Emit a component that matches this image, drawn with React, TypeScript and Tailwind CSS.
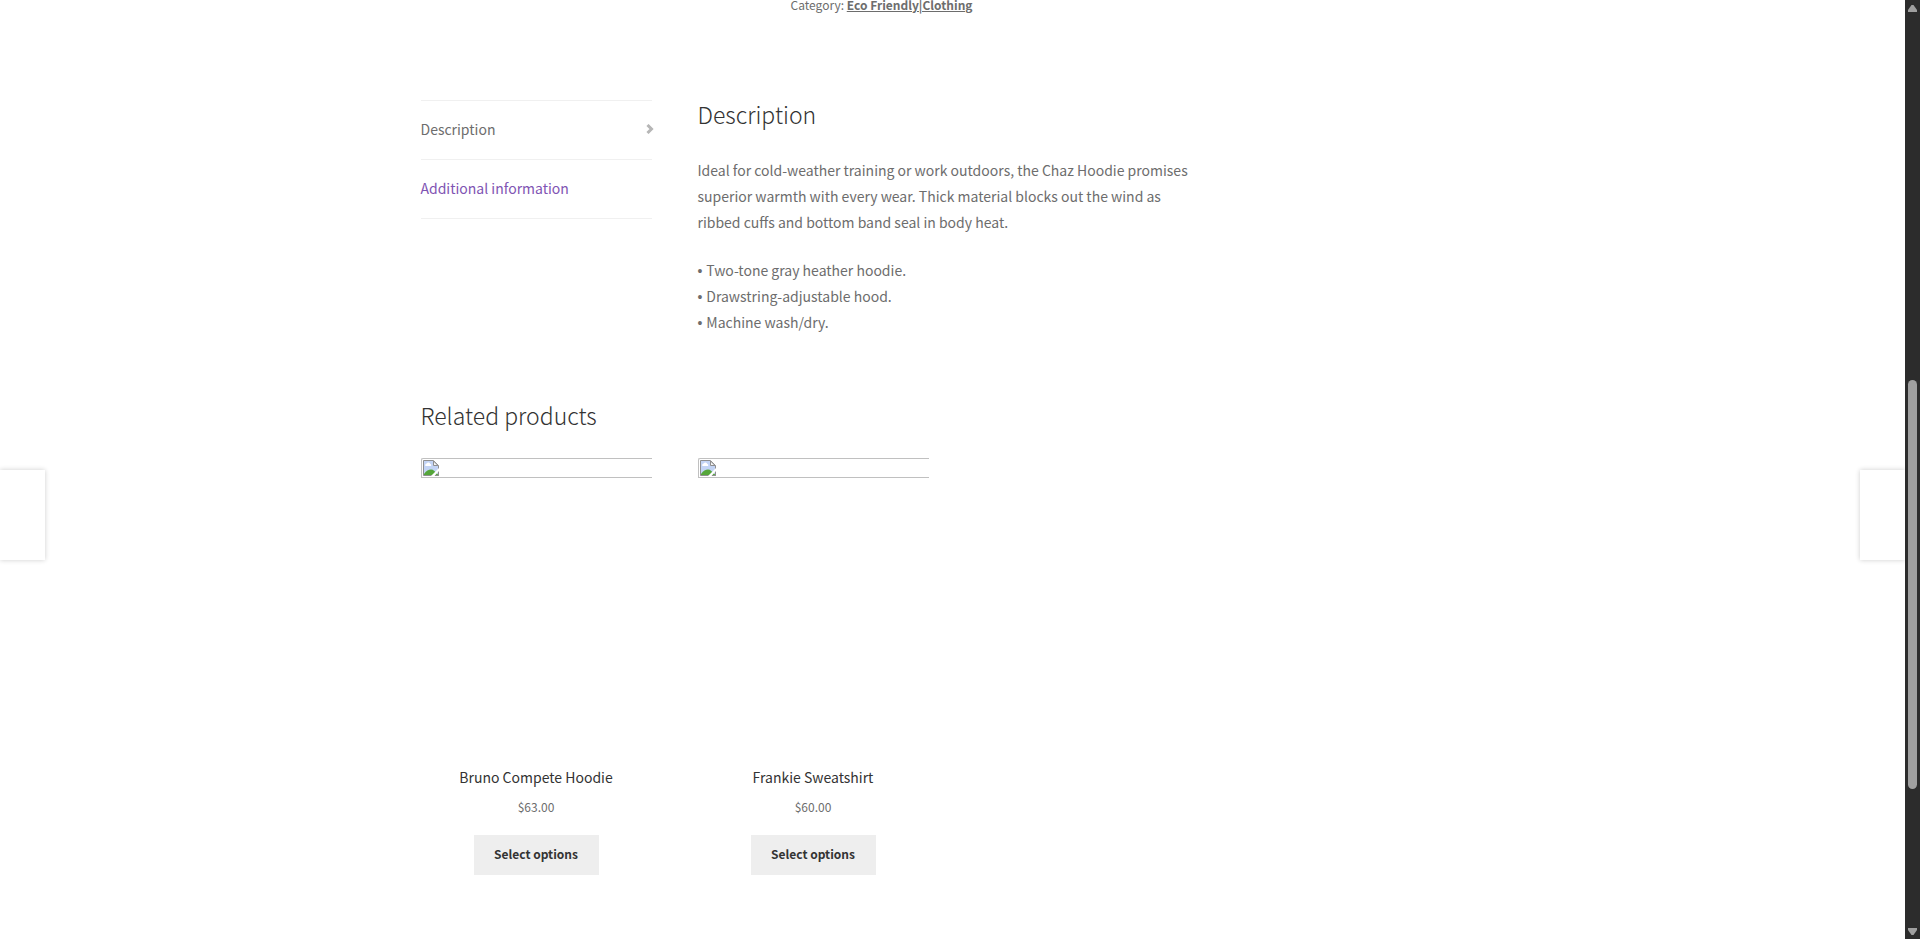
import React from "react";

type Product = { name: string; price: string };

const products: Product[] = [
  { name: "Bruno Compete Hoodie", price: "$63.00" },
  { name: "Frankie Sweatshirt", price: "$60.00" },
];

const features = [
  "Two-tone gray heather hoodie.",
  "Drawstring-adjustable hood.",
  "Machine wash/dry.",
];

function MissingImageIcon() {
  return (
    <svg width="16" height="16" viewBox="0 0 16 16" aria-hidden="true">
      <path d="M0.5 0.5H10.5L15.5 5.5V15.5H0.5Z" fill="#c3d4f5" stroke="#8f8f8f" />
      <path d="M2.5 6a1.5 1.5 0 0 1 1.2-2.4a2 2 0 0 1 3.6.3a1.2 1.2 0 0 1 .6 2.1z" fill="#fff" />
      <path d="M1 15V14C3.5 10.5 5.5 9.5 8 9.5S12 11.5 15 14.5V15Z" fill="#55a63a" />
      <path d="M10.5 1V5.5H15Z" fill="#f4f4f4" stroke="#8f8f8f" />
      <path d="M8 16L16 8V11L11.5 16Z" fill="#fff" />
      <path d="M15.5 12V15.5H12" fill="none" stroke="#8f8f8f" />
    </svg>
  );
}

function ProductCard({ name, price }: Product) {
  return (
    <li className="flex w-[231px] flex-col items-center text-center">
      <a href="#product" className="flex w-full flex-col items-center">
        <span className="mb-[285px] block h-5 w-full rounded-tl-xs border-y border-l border-[#c0c0c0] pt-px pl-px">
          <MissingImageIcon />
        </span>
        <h3 className="text-[14px] leading-7 text-[#333333]">{name}</h3>
        <span className="mt-1 text-[12px] leading-6 text-[#6d6d6d]">{price}</span>
      </a>
      <button
        type="button"
        className="mt-4 h-10 w-[125px] bg-[#eeeeee] pb-0.5 text-[12px] font-semibold text-[#333333]"
      >
        Select options
      </button>
    </li>
  );
}

function Scrollbar() {
  return (
    <div className="sticky top-0 flex h-screen w-[15px] shrink-0 flex-col items-center bg-[#2c2c2c] pt-[5px] pb-1">
      <svg width="9" height="7" viewBox="0 0 9 7" aria-hidden="true">
        <path d="M3.5 0h2L9 5v2H0V5z" fill="#9f9f9f" />
      </svg>
      <div className="grow-[368]" />
      <div className="w-[9px] grow-[409] rounded-full bg-[#9f9f9f]" />
      <div className="grow-[139]" />
      <svg width="9" height="7" viewBox="0 0 9 7" aria-hidden="true">
        <path d="M0 0h9v2L5.5 7h-2L0 2z" fill="#9f9f9f" />
      </svg>
    </div>
  );
}

export default function App() {
  return (
    <div className="flex min-h-screen bg-white font-['Noto_Sans_CJK_SC','Noto_Sans',sans-serif] text-[#6d6d6d]">
      <div className="relative min-w-0 grow overflow-hidden">
        <div className="mx-auto max-w-[1064px]">
          <main className="max-w-[786px]">
            <p className="pl-[370px] text-[12px] leading-[10px]">
              Category:{" "}
              <a href="#category" className="font-semibold underline">
                Eco Friendly|Clothing
              </a>
            </p>

            <section className="mt-[90px] flex gap-[46px]">
              <nav className="w-[231px] shrink-0 text-[14px]">
                <ul className="border-t border-[#f0f0f0]">
                  <li className="border-b border-[#f0f0f0]">
                    <a href="#description" className="flex h-[58px] items-center justify-between pb-0.5">
                      Description
                      <svg className="-mr-0.5" width="8" height="10" viewBox="0 0 8 10" aria-hidden="true">
                        <path d="M1.5 1L5.5 5L1.5 9" fill="none" stroke="#b6b6b6" strokeWidth="3" />
                      </svg>
                    </a>
                  </li>
                  <li className="border-b border-[#f0f0f0]">
                    <a href="#additional" className="flex h-[58px] items-center pb-0.5 text-[#7f54b3]">
                      Additional information
                    </a>
                  </li>
                </ul>
              </nav>
              <div id="description" className="text-[14px] leading-[26px]">
                <h2 className="text-[23px] leading-7 font-light text-[#333333]">Description</h2>
                <p className="mt-[29px]">
                  Ideal for cold-weather training or work outdoors, the Chaz Hoodie promises superior
                  warmth with every wear. Thick material blocks out the wind as ribbed cuffs and
                  bottom band seal in body heat.
                </p>
                <ul className="mt-[22px]">
                  {features.map((f) => (
                    <li key={f}>
                      <span className="font-['Liberation_Sans',sans-serif] leading-none">• </span>
                      {f}
                    </li>
                  ))}
                </ul>
              </div>
            </section>

            <section className="mt-[66px]">
              <h2 className="text-[23px] leading-7 font-light text-[#333333]">Related products</h2>
              <ul className="mt-[29px] flex gap-[46px]">
                {products.map((p) => (
                  <ProductCard key={p.name} {...p} />
                ))}
              </ul>
            </section>
          </main>
        </div>

        <a
          href="#previous"
          aria-label="Previous product"
          className="absolute top-[470px] left-0 h-[90px] w-[45px] bg-white shadow-[0_0_5px_rgba(0,0,0,0.2)]"
        />
        <a
          href="#next"
          aria-label="Next product"
          className="absolute top-[470px] right-0 h-[90px] w-[45px] bg-white shadow-[0_0_5px_rgba(0,0,0,0.2)]"
        />
      </div>
      <Scrollbar />
    </div>
  );
}
